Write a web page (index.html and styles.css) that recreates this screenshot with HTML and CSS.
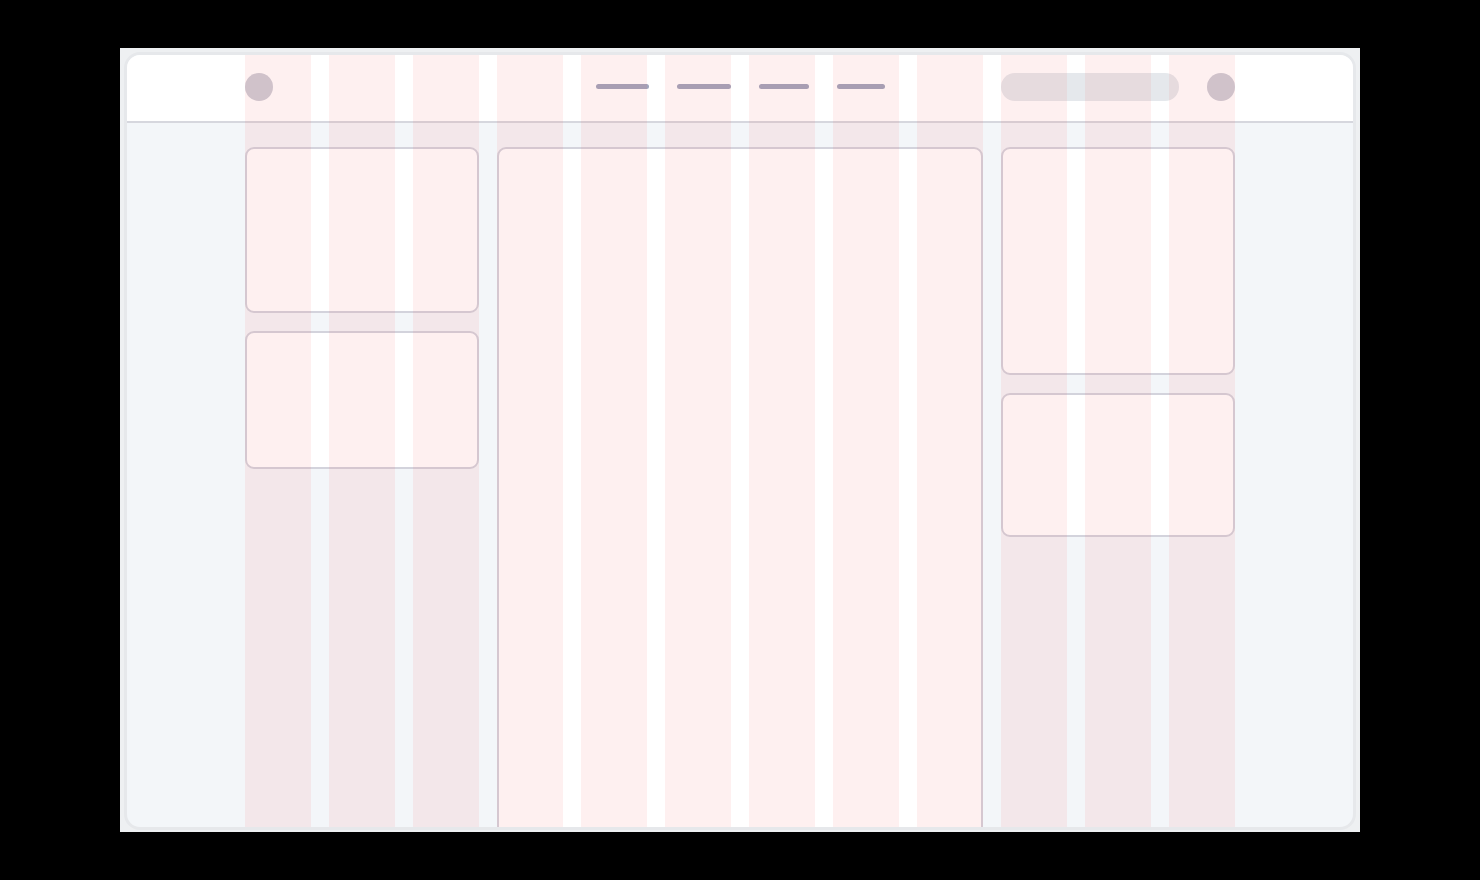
FILE: index.html
```html
<!DOCTYPE html>
<html lang="en">

<head>
    <meta charset="UTF-8">
    <meta name="viewport" content="width=device-width, initial-scale=1.0">
    <title>Layout grid</title>
    <link rel="stylesheet" href="styles.css">
</head>

<body>
    <div class="frame">
        <div class="window">
            <header class="topbar">
                <div class="container topbar-inner">
                    <div class="logo"></div>
                    <nav class="nav">
                        <span class="nav-link w1"></span>
                        <span class="nav-link w2"></span>
                        <span class="nav-link w3"></span>
                        <span class="nav-link w4"></span>
                    </nav>
                    <div class="actions">
                        <div class="search"></div>
                        <div class="avatar"></div>
                    </div>
                </div>
            </header>

            <main class="container content">
                <!-- colonne gauche -->
                <div class="stack">
                    <div class="card card-l1"></div>
                    <div class="card card-l2"></div>
                </div>
                <!-- contenu principal -->
                <div class="card card-main"></div>
                <!-- colonne droite -->
                <div class="stack">
                    <div class="card card-r1"></div>
                    <div class="card card-r2"></div>
                </div>
            </main>

            <!-- grille 12 colonnes par-dessus -->
            <div class="overlay">
                <div class="container overlay-grid">
                    <span></span><span></span><span></span><span></span>
                    <span></span><span></span><span></span><span></span>
                    <span></span><span></span><span></span><span></span>
                </div>
            </div>
        </div>
    </div>
</body>

</html>
```

FILE: styles.css
```css
body {
    margin: 0;
    background: #000;
    font-family: "Liberation Sans", Arial, sans-serif;
}

.frame {
    width: 1240px;
    height: 784px;
    margin: 48px 120px;
    padding: 4px 4px 2px;
    box-sizing: border-box;
    background: #eef0f2;
}

.window {
    position: relative;
    height: 100%;
    box-sizing: border-box;
    border: 3px solid #e6e8eb;
    border-radius: 16px;
    background: #f3f6f9;
    overflow: hidden;
}

.container {
    width: 990px;
    margin: 0 auto;
}

/* barre du haut */
.topbar {
    height: 66px;
    background: #fff;
    border-bottom: 2px solid #d6d7de;
}

.topbar-inner {
    height: 100%;
    box-sizing: border-box;
    padding-bottom: 3px;
    display: grid;
    grid-template-columns: 234px 1fr 234px;
    align-items: center;
}

.logo,
.avatar {
    width: 28px;
    height: 28px;
    border-radius: 50%;
    background: #cdcdd6;
}

.nav {
    display: flex;
    justify-content: center;
    gap: 28px;
}

.nav-link {
    height: 5px;
    border-radius: 3px;
    background: #a1a6bd;
}

.w1 { width: 53px; }
.w2 { width: 54px; }
.w3 { width: 50px; }
.w4 { width: 48px; }

.actions {
    display: flex;
    justify-content: space-between;
    align-items: center;
}

.search {
    width: 178px;
    height: 28px;
    border-radius: 14px;
    background: #e5e8ec;
}

/* contenu */
.content {
    padding-top: 24px;
    display: grid;
    grid-template-columns: 234px 486px 234px;
    gap: 18px;
    align-items: start;
}

.stack {
    display: flex;
    flex-direction: column;
    gap: 18px;
}

.card {
    background: #fff;
    border: 2px solid #d3d3dc;
    border-radius: 9px;
    box-sizing: border-box;
}

.card-l1 { height: 166px; }
.card-l2 { height: 138px; }
.card-main { height: 720px; }
.card-r1 { height: 228px; }
.card-r2 { height: 144px; }

/* grille */
.overlay {
    position: absolute;
    top: 0;
    left: 0;
    right: 0;
    bottom: 0;
    pointer-events: none;
}

.overlay-grid {
    height: 100%;
    display: grid;
    grid-template-columns: repeat(12, 66px);
    gap: 18px;
}

.overlay-grid span {
    background: rgba(240, 80, 80, 0.085);
}
```
